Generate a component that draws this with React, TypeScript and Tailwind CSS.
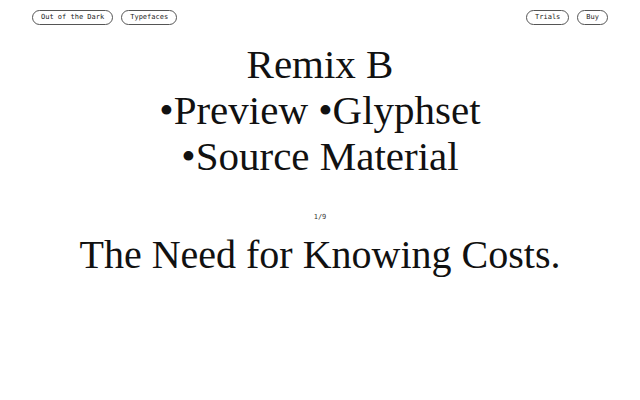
import React from "react";

const mono = { fontFamily: '"DejaVu Sans Mono", "Liberation Mono", monospace' };
const serif = { fontFamily: '"Liberation Serif", "Times New Roman", serif' };

function Pill({ children }: { children: React.ReactNode }) {
  return (
    <span
      className="inline-flex items-center h-[15px] px-[8px] rounded-full border border-[#555] text-[7px] leading-none text-[#222]"
      style={mono}
    >
      {children}
    </span>
  );
}

export default function App() {
  return (
    <div className="w-[640px] h-[400px] bg-white overflow-hidden flex flex-col">
      <div className="flex justify-between items-center px-[32px] pt-[10px]">
        <div className="flex gap-[8px]">
          <Pill>Out of the Dark</Pill>
          <Pill>Typefaces</Pill>
        </div>
        <div className="flex gap-[8px]">
          <Pill>Trials</Pill>
          <Pill>Buy</Pill>
        </div>
      </div>
      <div className="mt-[16px] text-center text-[41px] leading-[46px] text-[#111]" style={serif}>
        <div>Remix B</div>
        <div>•Preview •Glyphset</div>
        <div>•Source Material</div>
      </div>
      <div className="mt-[33px] text-center text-[7px] leading-[10px] text-[#333]" style={mono}>
        1/9
      </div>
      <div className="mt-[10px] text-center text-[40px] leading-[46px] text-[#111]" style={serif}>
        The Need for Knowing Costs.
      </div>
    </div>
  );
}
